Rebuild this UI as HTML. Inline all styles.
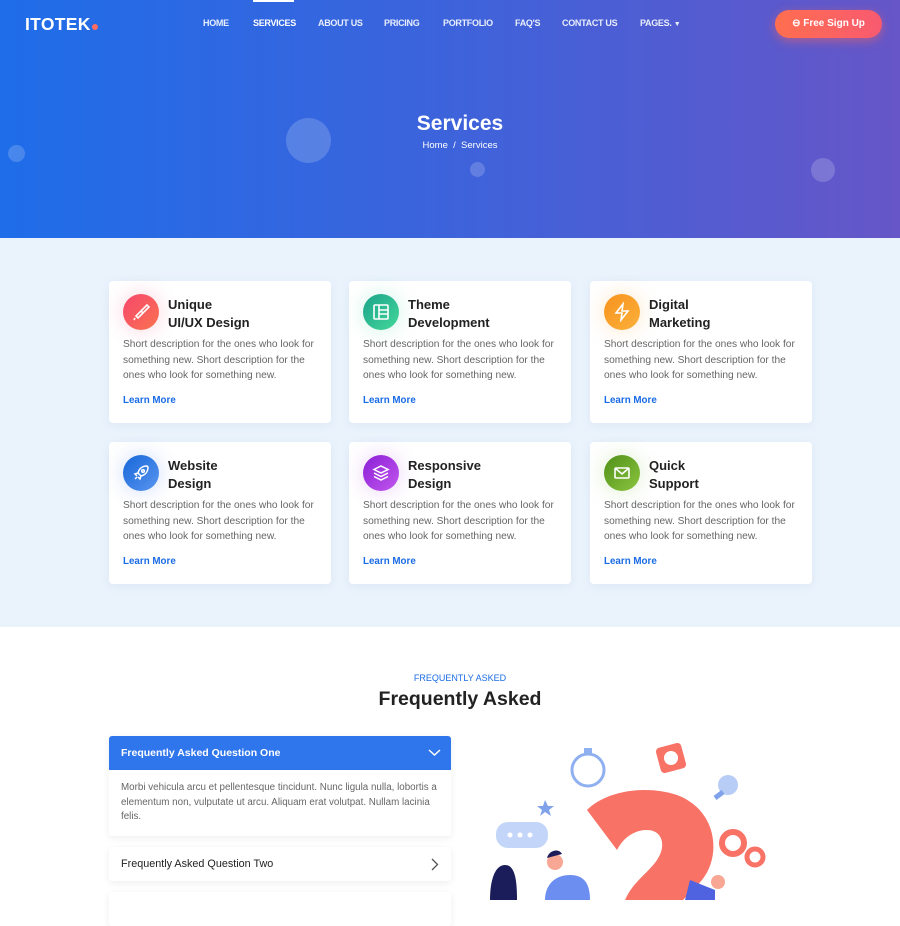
<!DOCTYPE html><html><head><style>
*{margin:0;padding:0;box-sizing:border-box}
body{width:900px;height:900px;overflow:hidden;font-family:"Liberation Sans",sans-serif;background:#fff;position:relative}
.hero{position:absolute;left:0;top:0;width:900px;height:238px;background:linear-gradient(90deg,#1f6de9 0%,#3d63db 50%,#6656c8 100%);overflow:hidden}
.logo{position:absolute;left:25px;top:14px;color:#fff;font-weight:bold;font-size:17.5px;letter-spacing:.3px}
.logo i{display:inline-block;width:6px;height:6px;border-radius:50%;background:#ff6b5e;margin-left:1px}
.nav{position:absolute;top:18px;font-size:9px;color:#e8eefc;font-weight:bold;letter-spacing:-.3px}
.btn{position:absolute;left:775px;top:10px;width:107px;height:28px;border-radius:14px;background:linear-gradient(90deg,#ff6e4f,#f85a70);color:#fff;font-size:10px;font-weight:bold;text-align:center;line-height:28px;box-shadow:0 3px 10px rgba(255,100,90,.5)}
.bub{position:absolute;border-radius:50%;background:rgba(255,255,255,.18)}
.svc{position:absolute;left:0;top:238px;width:900px;height:389px;background:#eaf3fc}
.card{position:absolute;width:222px;height:142px;background:#fff;border-radius:4px;box-shadow:0 2px 10px rgba(60,100,160,.08)}
.ic{position:absolute;left:14px;top:13px;width:36px;height:36px;border-radius:50%;display:flex;align-items:center;justify-content:center}
.ct{position:absolute;left:59px;top:15px;font-size:13px;font-weight:bold;color:#222;line-height:18px}
.cd{position:absolute;left:14px;top:56px;width:200px;font-size:10.2px;color:#666;line-height:15.5px}
.lm{position:absolute;left:14px;top:114px;font-size:9.8px;font-weight:bold;color:#1a6be6}
.acc{position:absolute;left:109px;width:342px;background:#fff;border-radius:3px;box-shadow:0 2px 8px rgba(0,0,0,.07)}
</style></head><body>
<div class="hero">
<div class="bub" style="left:286px;top:118px;width:45px;height:45px"></div>
<div class="bub" style="left:8px;top:145px;width:17px;height:17px"></div>
<div class="bub" style="left:470px;top:162px;width:15px;height:15px"></div>
<div class="bub" style="left:811px;top:158px;width:24px;height:24px"></div>
<div class="logo">ITOTEK<i></i></div>
<div style="position:absolute;left:253px;top:0;width:41px;height:2px;background:#fff"></div>
<div class="nav" style="left:203px">HOME</div>
<div class="nav" style="left:253px;color:#fff">SERVICES</div>
<div class="nav" style="left:318px">ABOUT US</div>
<div class="nav" style="left:384px">PRICING</div>
<div class="nav" style="left:443px">PORTFOLIO</div>
<div class="nav" style="left:515px">FAQ'S</div>
<div class="nav" style="left:562px">CONTACT US</div>
<div class="nav" style="left:640px">PAGES. <span style="font-size:7px">▼</span></div>
<div class="btn">⊖ Free Sign Up</div>
<div style="position:absolute;left:10px;width:900px;top:112px;text-align:center;color:#fff;font-size:21px;font-weight:bold">Services</div>
<div style="position:absolute;left:10px;width:900px;top:140px;text-align:center;color:#fff;font-size:9.5px">Home &nbsp;/&nbsp; Services</div>
</div>
<div class="svc">
<div class="card" style="left:109px;top:43px"><div class="ic" style="background:linear-gradient(135deg,#f8466e,#f9734f);box-shadow:0 0 20px rgba(248,80,120,.25)"><svg width="20" height="20" viewBox="0 0 20 20" fill="none" stroke="#fff" stroke-width="1.6"><path d="M16 3l-6 6 2 2 6-6zM10 9l-5 5 2 2 5-5M4 16l-1 2"/></svg></div><div class="ct">Unique<br>UI/UX Design</div><div class="cd">Short description for the ones who look for something new. Short description for the ones who look for something new.</div><div class="lm">Learn More</div></div>
<div class="card" style="left:349px;top:43px"><div class="ic" style="background:linear-gradient(135deg,#1aa28a,#45d89a);box-shadow:0 0 20px rgba(60,210,150,.25)"><svg width="20" height="20" viewBox="0 0 20 20" fill="none" stroke="#fff" stroke-width="1.6"><rect x="3" y="3" width="14" height="14" rx="1"/><path d="M8 3v14M8 8h9M8 12h9"/></svg></div><div class="ct">Theme<br>Development</div><div class="cd">Short description for the ones who look for something new. Short description for the ones who look for something new.</div><div class="lm">Learn More</div></div>
<div class="card" style="left:590px;top:43px"><div class="ic" style="background:linear-gradient(135deg,#f7931e,#fbb03b);box-shadow:0 0 20px rgba(250,160,40,.25)"><svg width="20" height="20" viewBox="0 0 20 20" fill="none" stroke="#fff" stroke-width="1.6"><path d="M11 2L4 11h6l-1 7 7-9h-6z"/></svg></div><div class="ct">Digital<br>Marketing</div><div class="cd">Short description for the ones who look for something new. Short description for the ones who look for something new.</div><div class="lm">Learn More</div></div>
<div class="card" style="left:109px;top:204px"><div class="ic" style="background:linear-gradient(135deg,#1667d8,#5a95f0);box-shadow:0 0 20px rgba(60,110,240,.25)"><svg width="20" height="20" viewBox="0 0 20 20" fill="none" stroke="#fff" stroke-width="1.5"><path d="M16 3c-5 0-8 3-9 7l3 3c4-1 7-4 7-9zM7 10l-3 1 2 2M10 13l-1 3-2-2M4 16l2-2"/><circle cx="12" cy="8" r="1.3"/></svg></div><div class="ct">Website<br>Design</div><div class="cd">Short description for the ones who look for something new. Short description for the ones who look for something new.</div><div class="lm">Learn More</div></div>
<div class="card" style="left:349px;top:204px"><div class="ic" style="background:linear-gradient(135deg,#8a1fd6,#c257ee);box-shadow:0 0 20px rgba(170,70,230,.25)"><svg width="20" height="20" viewBox="0 0 20 20" fill="none" stroke="#fff" stroke-width="1.5"><path d="M10 3l7 3.5-7 3.5-7-3.5zM3 10l7 3.5 7-3.5M3 13.5l7 3.5 7-3.5"/></svg></div><div class="ct">Responsive<br>Design</div><div class="cd">Short description for the ones who look for something new. Short description for the ones who look for something new.</div><div class="lm">Learn More</div></div>
<div class="card" style="left:590px;top:204px"><div class="ic" style="background:linear-gradient(135deg,#4f8f19,#8cc63f);box-shadow:0 0 20px rgba(120,190,60,.25)"><svg width="20" height="20" viewBox="0 0 20 20" fill="none" stroke="#fff" stroke-width="1.6"><rect x="3" y="5" width="14" height="10" rx="1"/><path d="M3 5l7 6 7-6"/></svg></div><div class="ct">Quick<br>Support</div><div class="cd">Short description for the ones who look for something new. Short description for the ones who look for something new.</div><div class="lm">Learn More</div></div>
</div>
<div style="position:absolute;left:0;width:920px;top:673px;text-align:center;font-size:9px;color:#1a6be6">FREQUENTLY ASKED</div>
<div style="position:absolute;left:0;width:920px;top:688px;text-align:center;font-size:19.5px;font-weight:bold;color:#222">Frequently Asked</div>
<div class="acc" style="top:736px;height:100px">
<div style="background:#2f75eb;height:34px;border-radius:3px 3px 0 0;color:#fff;font-size:10.5px;font-weight:bold;line-height:34px;padding-left:12px;position:relative">Frequently Asked Question One<svg style="position:absolute;right:10px;top:12px" width="13" height="9" viewBox="0 0 13 9" fill="none" stroke="#fff" stroke-width="1.5"><path d="M1 2l5.5 5 5.5-5"/></svg></div>
<div style="padding:11px 12px;font-size:9.8px;line-height:14.5px;color:#666">Morbi vehicula arcu et pellentesque tincidunt. Nunc ligula nulla, lobortis a elementum non, vulputate ut arcu. Aliquam erat volutpat. Nullam lacinia felis.</div></div>
<div class="acc" style="top:847px;height:34px;font-size:10.8px;color:#222;line-height:34px;padding-left:12px">Frequently Asked Question Two<svg style="position:absolute;right:12px;top:11px" width="8" height="13" viewBox="0 0 8 13" fill="none" stroke="#555" stroke-width="1.3"><path d="M1 1l5.5 5.5L1 12"/></svg></div>
<div class="acc" style="top:892px;height:34px"></div>
<svg style="position:absolute;left:460px;top:730px" width="320" height="170" viewBox="0 0 320 170">
<path d="M127 80c20-20 60-25 90-15 40 15 45 60 25 85-10 12-20 18-25 30l-55 0c5-25 25-35 35-50 10-15 5-30-10-30-15 0-25 10-30 20z" fill="#f87265"/>
<circle cx="128" cy="40" r="16" fill="none" stroke="#8fb0f0" stroke-width="3"/><rect x="124" y="18" width="8" height="6" fill="#8fb0f0"/>
<rect x="198" y="15" width="26" height="26" rx="4" fill="#f87265" transform="rotate(-15 211 28)"/><circle cx="211" cy="28" r="7" fill="#fff"/>
<circle cx="268" cy="55" r="10" fill="#b8cdf6"/><path d="M263 62l-8 6" stroke="#7fa2ea" stroke-width="5"/>
<circle cx="273" cy="113" r="11" fill="none" stroke="#f87265" stroke-width="6"/><circle cx="295" cy="127" r="8" fill="none" stroke="#f87265" stroke-width="5"/>
<path d="M85 70l3 6 6 0-5 4 2 6-6-4-5 4 2-6-5-4 6 0z" fill="#7fa2ea"/>
<rect x="36" y="92" width="52" height="26" rx="12" fill="#c3d5f8"/><circle cx="50" cy="105" r="2.5" fill="#fff"/><circle cx="60" cy="105" r="2.5" fill="#fff"/><circle cx="70" cy="105" r="2.5" fill="#fff"/>
<path d="M30 170c0-20 5-35 15-35s12 15 12 35z" fill="#1b1d5a"/>
<path d="M85 170c0-15 10-25 25-25s20 10 20 25z" fill="#6b8ef0"/><circle cx="95" cy="132" r="8" fill="#f7a793"/><path d="M87 128c2-8 12-10 15-4" fill="#1b1d5a"/>
<path d="M230 150l25 10 0 10-30 0z" fill="#4f62e0"/><circle cx="258" cy="152" r="7" fill="#f7a793"/>
</svg>
</body></html>
